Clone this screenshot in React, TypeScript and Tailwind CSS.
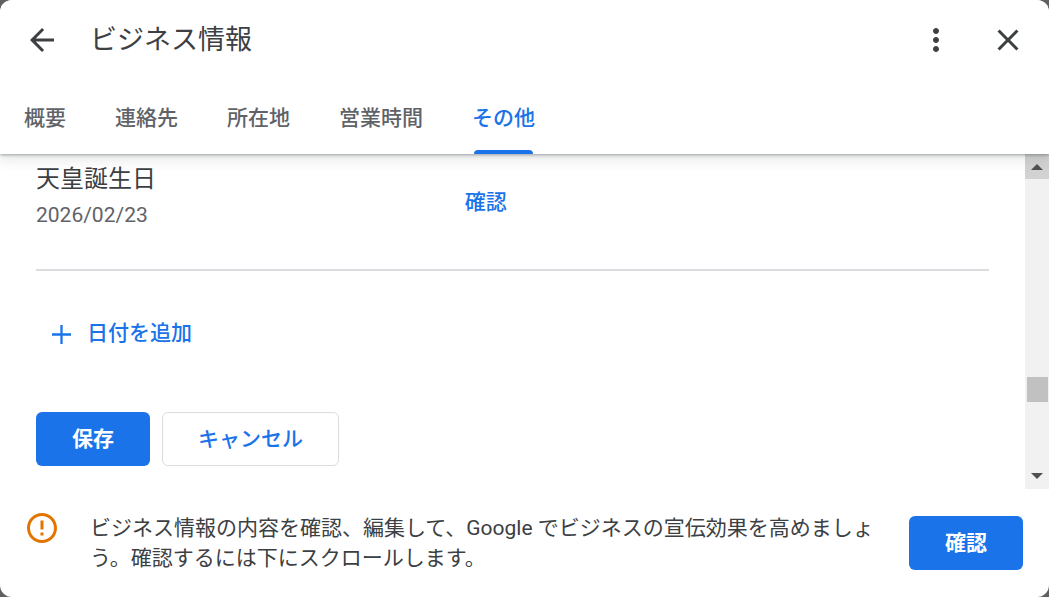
import { useState } from "react";
import clsx from "clsx";

const tabs = ["概要", "連絡先", "所在地", "営業時間", "その他"];

interface IconProps {
  path: string;
  className?: string;
}

const Icon = ({ path, className }: IconProps) => (
  <svg
    viewBox="0 0 24 24"
    fill="currentColor"
    aria-hidden="true"
    className={clsx("h-9 w-9 shrink-0", className)}
  >
    <path d={path} />
  </svg>
);

const Header = () => {
  const [selected, setSelected] = useState("その他");

  return (
    <header className="relative z-10 shrink-0 bg-white shadow-[0_1px_3px_rgba(60,64,67,0.45),0_4px_12px_2px_rgba(60,64,67,0.12)]">
      <div className="flex h-20 items-center pr-[23px] pl-6">
        <button type="button" aria-label="戻る">
          <Icon path="M20 11H7.83l5.59-5.59L12 4l-8 8 8 8 1.41-1.41L7.83 13H20v-2z" />
        </button>
        <h1 className="ml-[30px] flex-1 text-[27px] leading-9">ビジネス情報</h1>
        <button type="button" aria-label="その他のオプション">
          <Icon path="M12 8c1.1 0 2-.9 2-2s-.9-2-2-2-2 .9-2 2 .9 2 2 2zm0 2c-1.1 0-2 .9-2 2s.9 2 2 2 2-.9 2-2-.9-2-2-2zm0 6c-1.1 0-2 .9-2 2s.9 2 2 2 2-.9 2-2-.9-2-2-2z" />
        </button>
        <button type="button" aria-label="閉じる" className="ml-9">
          <Icon path="M19 6.41L17.59 5 12 10.59 6.41 5 5 6.41 10.59 12 5 17.59 6.41 19 12 13.41 17.59 19 19 17.59 13.41 12z" />
        </button>
      </div>
      <nav role="tablist" className="flex h-[74px] gap-px">
        {tabs.map((tab) => (
          <button
            key={tab}
            type="button"
            role="tab"
            aria-selected={tab === selected}
            onClick={() => setSelected(tab)}
            className={clsx(
              "flex flex-col px-6 text-[21px] leading-8 font-medium whitespace-nowrap",
              tab === selected ? "text-[#1a73e8]" : "text-[#5f6368]"
            )}
          >
            <span className="flex flex-1 items-center pt-1.5">{tab}</span>
            <span
              className={clsx(
                "mx-0.5 h-1 self-stretch rounded-t",
                tab === selected && "bg-[#1a73e8]"
              )}
            />
          </button>
        ))}
      </nav>
    </header>
  );
};

const ScrollBar = () => (
  <div className="flex w-6 shrink-0 flex-col bg-[#f1f1f1] text-[#505050]">
    <button
      type="button"
      aria-label="上へスクロール"
      className="flex h-[25px] items-center justify-center bg-[#d2d2d2]"
    >
      <svg viewBox="0 0 12 6" className="h-1.5 w-3" fill="currentColor">
        <path d="M6 0l6 6H0z" />
      </svg>
    </button>
    <div className="flex flex-1 flex-col pr-px pl-0.5">
      <div className="grow-[198]" />
      <div className="h-[25px] bg-[#c1c1c1]" />
      <div className="grow-[62]" />
    </div>
    <button
      type="button"
      aria-label="下へスクロール"
      className="flex h-[25px] items-center justify-center pb-0.5"
    >
      <svg viewBox="0 0 12 6" className="h-1.5 w-3" fill="currentColor">
        <path d="M0 0h12L6 6z" />
      </svg>
    </button>
  </div>
);

const SpecialHours = () => (
  <main className="min-w-0 flex-1 overflow-hidden px-9 pt-[7px]">
    <div className="flex items-center border-b-2 border-[#dadce0] pb-[26px]">
      <div className="w-[45%] pb-2.5">
        <p className="text-2xl leading-9">天皇誕生日</p>
        <p className="text-[21px] leading-9 text-[#5f6368]">2026/02/23</p>
      </div>
      <button
        type="button"
        className="text-[21px] leading-8 font-medium text-[#1a73e8]"
      >
        確認
      </button>
    </div>
    <button
      type="button"
      className="mt-9 flex h-[54px] items-center gap-3 px-3 text-[21px] font-medium text-[#1a73e8]"
    >
      <svg
        viewBox="0 0 27 27"
        className="h-[27px] w-[27px]"
        stroke="currentColor"
        strokeWidth="2.3"
      >
        <path d="M4 13.5h19M13.5 4v19" />
      </svg>
      日付を追加
    </button>
    <div className="mt-[51px] flex gap-3 text-[21px]">
      <button
        type="button"
        className="h-[54px] rounded-md bg-[#1a73e8] px-9 pt-0.5 font-bold text-white"
      >
        保存
      </button>
      <button
        type="button"
        className="h-[54px] rounded-md border border-[#dadce0] px-[35px] pt-0.5 font-medium text-[#1a73e8]"
      >
        キャンセル
      </button>
    </div>
  </main>
);

const Footer = () => (
  <footer className="flex shrink-0 items-start pt-6 pr-[26px] pb-6 pl-6">
    <Icon
      className="-mt-[3px] text-[#e37400]"
      path="M11 15h2v2h-2v-2zm0-8h2v6h-2V7zm.99-5C6.47 2 2 6.48 2 12s4.47 10 9.99 10C17.52 22 22 17.52 22 12S17.52 2 11.99 2zM12 20c-4.42 0-8-3.58-8-8s3.58-8 8-8 8 3.58 8 8-3.58 8-8 8z"
    />
    <p className="mr-6 ml-[30px] flex-1 text-[21px] leading-[30px]">
      ビジネス情報の内容を確認、編集して、Google
      でビジネスの宣伝効果を高めましょう。確認するには下にスクロールします。
    </p>
    <button
      type="button"
      className="mt-[3px] h-[54px] shrink-0 rounded-md bg-[#1a73e8] px-9 pt-0.5 text-[21px] font-bold text-white"
    >
      確認
    </button>
  </footer>
);

export default function App() {
  return (
    <div className="h-screen bg-[#5f6062]">
      <div
        lang="ja"
        className="flex h-full flex-col overflow-hidden rounded-xl bg-white font-[Roboto,'Noto_Sans_CJK_JP',sans-serif] text-[#3c4043]"
      >
        <Header />
        <div className="flex min-h-0 flex-1">
          <SpecialHours />
          <ScrollBar />
        </div>
        <Footer />
      </div>
    </div>
  );
}
